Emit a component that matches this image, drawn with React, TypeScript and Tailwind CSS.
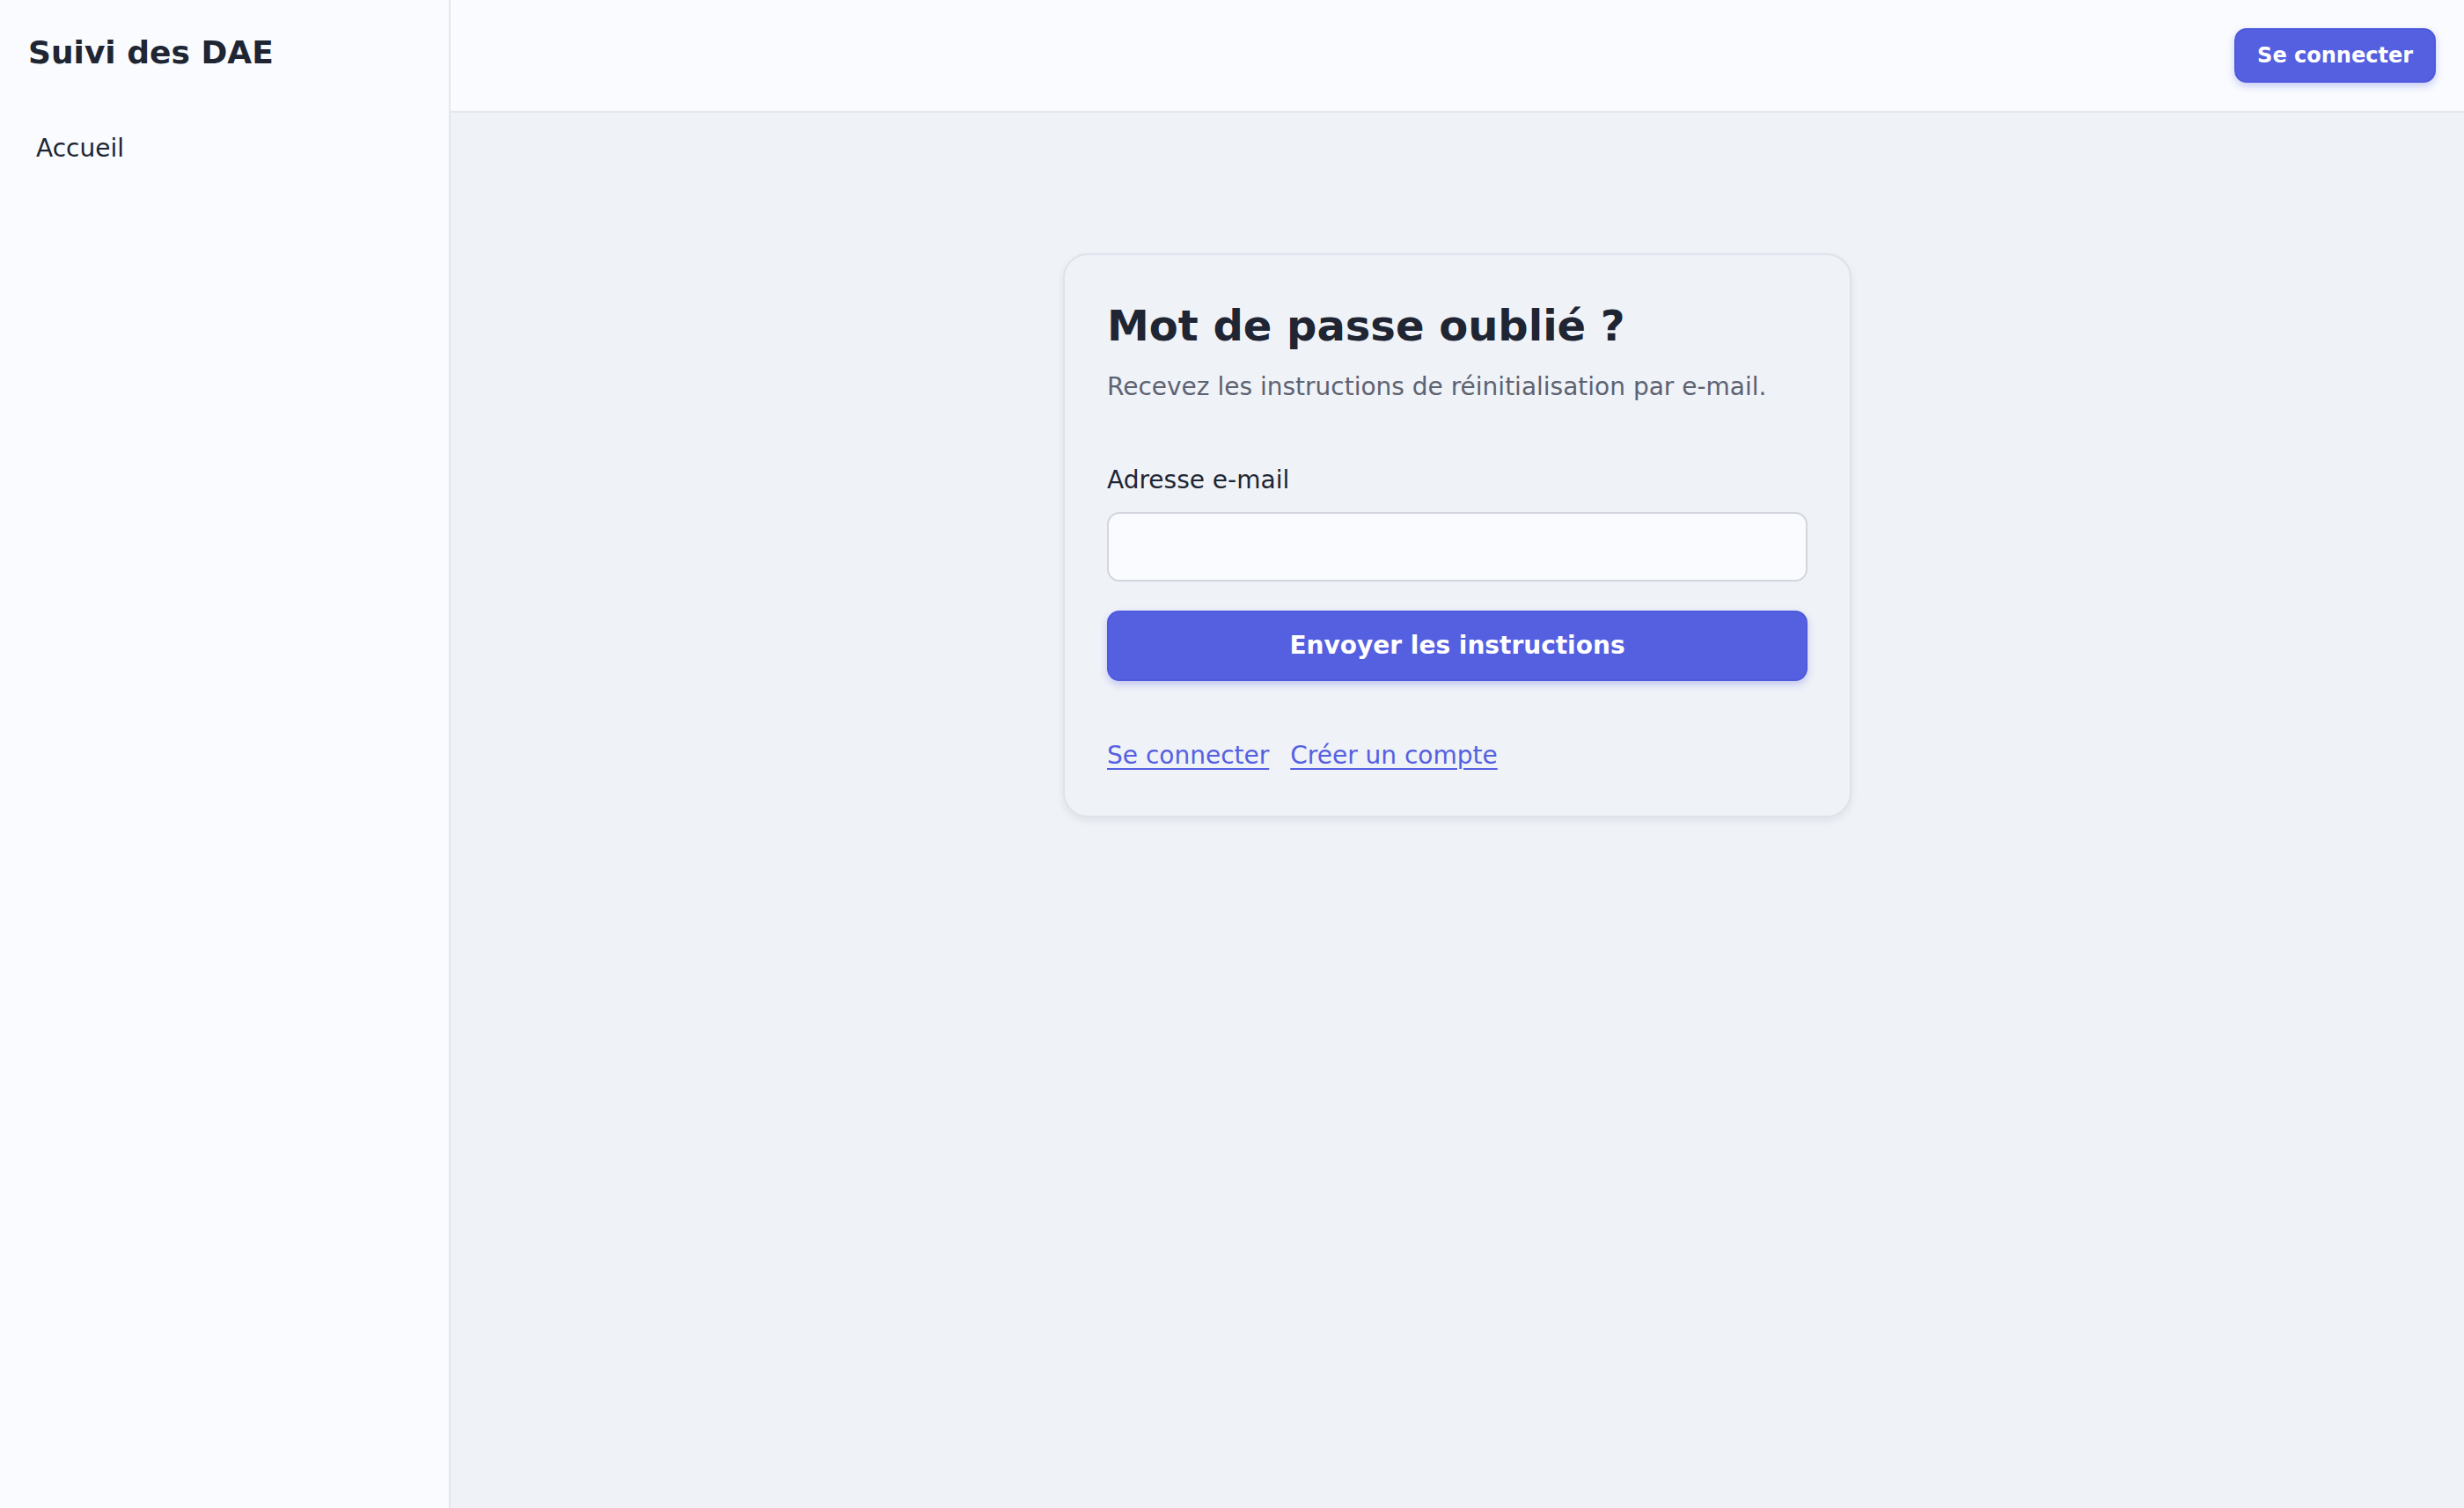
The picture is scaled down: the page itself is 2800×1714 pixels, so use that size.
const font = { fontFamily: '"DejaVu Sans", "Noto Sans", sans-serif' };

function Sidebar() {
  return (
    <aside className="w-[512px] shrink-0 border-r-2 border-[#e3e6ee] bg-[#f9fbfe] p-[32px]">
      <div className="text-[36px] leading-[56px] font-bold text-[#202533]">Suivi des DAE</div>
      <nav className="mt-[61px] flex flex-col">
        <a href="#" className="pl-[9px] text-[28px] leading-[40px] text-[#202533]">
          Accueil
        </a>
      </nav>
    </aside>
  );
}

function Header() {
  return (
    <header className="h-[128px] shrink-0 border-b-2 border-[#e3e6ee] bg-[#f9fbfe] px-[32px] flex items-center justify-end">
      <button className="h-[62px] px-[24px] rounded-[14px] border-2 border-[#4f59dc] bg-[#5560e1] text-white text-[24px] font-bold shadow-[0_4px_8px_rgba(85,96,225,0.3)]">
        Se connecter
      </button>
    </header>
  );
}

function ForgotPasswordCard() {
  return (
    <div className="w-[896px] rounded-[28px] border-2 border-[#dfe2ea] bg-[#eff2f7] p-[48px] shadow-[0_4px_10px_rgba(15,23,42,0.07)]">
      <h1 className="text-[48px] leading-[64px] font-bold text-[#202533]">Mot de passe oublié ?</h1>
      <p className="mt-[18px] text-[28px] leading-[40px] text-[#5d6271]">
        Recevez les instructions de réinitialisation par e-mail.
      </p>

      <form className="mt-[66px] flex flex-col" onSubmit={(e) => e.preventDefault()}>
        <label htmlFor="email" className="text-[28px] leading-[40px] text-[#202533]">
          Adresse e-mail
        </label>
        <input
          id="email"
          type="email"
          className="mt-[16px] h-[79px] rounded-[14px] border-2 border-[#d3d6dd] bg-[#f9fbfe] px-[24px] text-[28px] outline-none"
        />
        <button
          type="submit"
          className="mt-[33px] h-[80px] rounded-[14px] border-2 border-[#4f59dc] bg-[#5560e1] text-white text-[28px] font-bold shadow-[0_4px_8px_rgba(85,96,225,0.3)]"
        >
          Envoyer les instructions
        </button>
      </form>

      <div className="mt-[65px] flex gap-[24px] text-[28px] leading-[40px] text-[#5560e1]">
        <a href="#" className="underline decoration-2 underline-offset-[5px]">Se connecter</a>
        <a href="#" className="underline decoration-2 underline-offset-[5px]">Créer un compte</a>
      </div>
    </div>
  );
}

export default function App() {
  return (
    <div className="flex h-[1714px] w-full bg-[#eff2f7]" style={font}>
      <Sidebar />
      <div className="flex flex-1 flex-col">
        <Header />
        <main className="flex flex-1 justify-center pt-[160px]">
          <div>
            <ForgotPasswordCard />
          </div>
        </main>
      </div>
    </div>
  );
}
